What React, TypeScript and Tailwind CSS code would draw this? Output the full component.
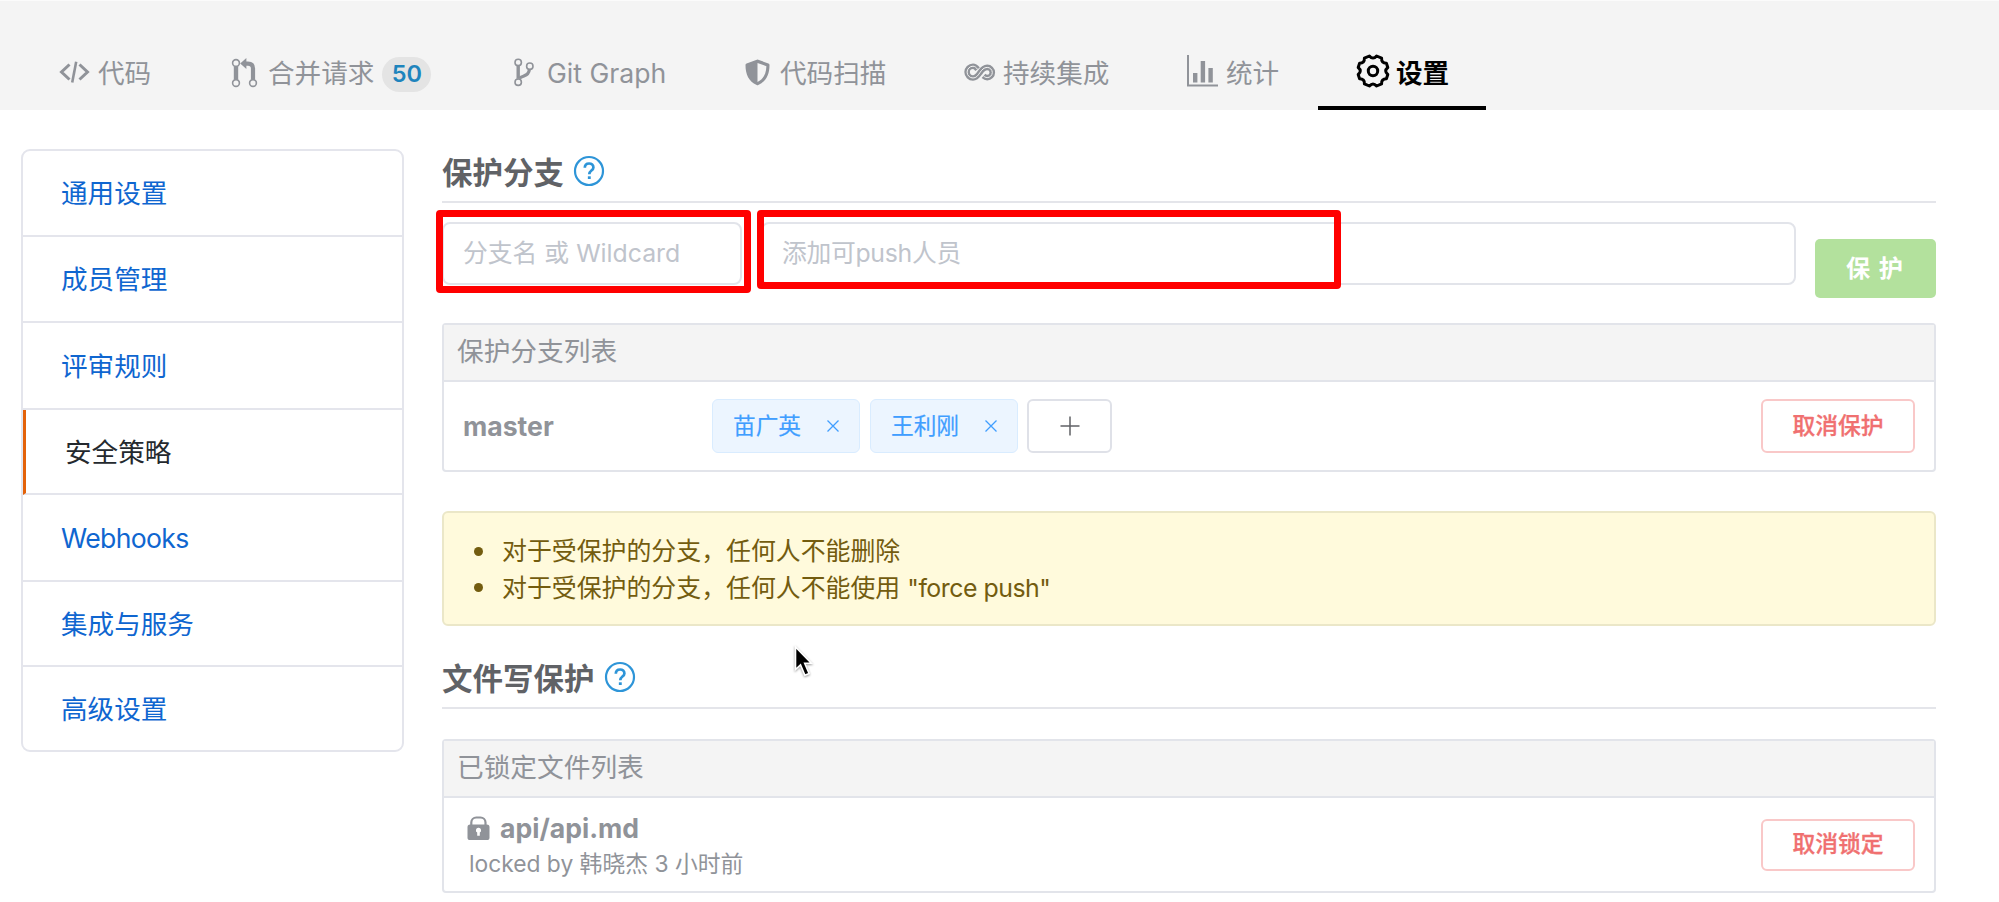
import type { ReactNode } from "react";

function CodeIcon() {
  return (
    <svg width="31" height="24" viewBox="0 0 31 24" fill="none" stroke="currentColor" strokeWidth="3">
      <path d="M10.5 4.5 2.5 12l8 7.5M20.5 4.5l8 7.5-8 7.5" />
      <path d="M17.2 1.8 13.2 22.4" strokeWidth="2.6" />
    </svg>
  );
}

function MergeIcon() {
  return (
    <svg width="27" height="31" viewBox="0 0 27 31" fill="none" stroke="currentColor">
      <circle cx="5" cy="6" r="3.4" strokeWidth="1.6" />
      <circle cx="5" cy="26" r="3.4" strokeWidth="1.6" />
      <circle cx="22" cy="26" r="3.4" strokeWidth="1.6" />
      <path d="M5 9.5v13" strokeWidth="4.4" />
      <path d="M22 22.5V11.5Q22 6.6 17 6.6H14" strokeWidth="4.2" />
      <path d="M9.2 6.4 15.4 1v11z" fill="currentColor" stroke="none" />
    </svg>
  );
}

function BranchIcon() {
  return (
    <svg width="20" height="29" viewBox="0 0 20 29" fill="none" stroke="currentColor">
      <circle cx="4.2" cy="4.4" r="3.2" strokeWidth="1.6" />
      <circle cx="4.2" cy="24.2" r="3.2" strokeWidth="1.6" />
      <circle cx="15.8" cy="8.2" r="3.2" strokeWidth="1.6" />
      <path d="M4.2 7.8v13" strokeWidth="3.4" />
      <path d="M15.4 11.4c-.4 4-2.4 5.6-5.4 6.5-2.4.7-3.8 1.1-4.6 2.6" strokeWidth="3.2" />
    </svg>
  );
}

function ShieldIcon() {
  return (
    <svg width="25" height="27" viewBox="0 0 25 27" fill="currentColor">
      <path
        fillRule="evenodd"
        d="M12.5.6 23.4 4.4q1.1.4 1.1 1.5c0 9.4-3.2 16.3-11.2 20.1q-.8.4-1.6 0C3.7 22.2.5 15.3.5 5.9q0-1.1 1.1-1.5zM12.5 3.9v19.2c6-3 8.600-8.300 8.900-15.900z"
      />
    </svg>
  );
}

const LOOP = "M13.600 7.300C12.300 5.600 11 4.200 9 4.200a5.900 5.900 0 0 0 0 11.800c3.300 0 4.800-2.300 6.800-5.200S19.800 5.400 23.200 5.400a5 5 0 0 1 0 10.200c-1.600 0-2.600-.7-3.700-1.700";

function InfinityIcon() {
  return (
    <svg width="32" height="20" viewBox="0 0 32 20" fill="none">
      <path d={LOOP} stroke="currentColor" strokeWidth="5.600" />
      <path d={LOOP} stroke="#f4f4f4" strokeWidth="1" />
    </svg>
  );
}

function ChartIcon() {
  return (
    <svg width="32" height="34" viewBox="0 0 32 34" fill="currentColor">
      <path d="M0 0h2v29.600h29v2H0z" />
      <path d="M6 18h4.400v9.600H6zM13.700 6h4.400v21.600h-4.400zM21.400 13h4.400v14.600h-4.400z" />
    </svg>
  );
}

function GearIcon() {
  return (
    <svg width="34" height="36" viewBox="0 0 34 36" fill="none" stroke="currentColor" strokeWidth="3" strokeLinejoin="round">
      <path d="M13.400 3Q17 7.200 20.600 3L25.600 5.200Q25.200 10 30.400 10.200L31.800 14.500Q27.600 18 31.800 21.500L30.400 25.800Q25.200 26 25.600 30.800L20.600 33Q17 28.800 13.400 33L8.400 30.800Q8.800 26 3.600 25.800L2.200 21.500Q6.400 18 2.200 14.500L3.600 10.200Q8.800 10 8.400 5.200z" />
      <circle cx="17" cy="18" r="4.700" />
    </svg>
  );
}

function LockIcon() {
  return (
    <svg width="23" height="26" viewBox="0 0 23 26" fill="none">
      <path d="M4.300 11V7.500a5 5 0 0 1 5-5h4.200a5 5 0 0 1 5 5V11" stroke="currentColor" strokeWidth="2.200" />
      <rect x="0.500" y="9.500" width="22" height="15.500" rx="2.600" fill="currentColor" />
      <path d="M11.500 12.800a2.500 2.500 0 0 1 1.300 4.700v3.200h-2.600v-3.200a2.500 2.500 0 0 1 1.300-4.700z" fill="#fff" />
    </svg>
  );
}

function HelpIcon() {
  return (
    <svg width="32" height="32" viewBox="0 0 32 32" fill="none" stroke="#2e95d8">
      <circle cx="16" cy="16" r="14" strokeWidth="2.200" />
      <path d="M11.800 12.800c0-2.700 1.800-4.300 4.300-4.300s4.300 1.600 4.300 3.900c0 3.200-4.100 3.200-4.100 6.800" strokeWidth="2.700" />
      <path d="M16.300 21.300v2.700" strokeWidth="2.900" />
    </svg>
  );
}

function CloseIcon() {
  return (
    <svg width="12" height="12" viewBox="0 0 12 12" stroke="currentColor" strokeWidth="1.300">
      <path d="M.5.5l11 11M11.500.5l-11 11" />
    </svg>
  );
}

function Tab({ icon, iconBox, width, label, badge }: { icon: ReactNode; iconBox: string; width: string; label: string; badge?: string }) {
  return (
    <a className={`flex h-full items-center ${width}`}>
      <span className={`flex shrink-0 items-center pb-[1px] ${iconBox}`}>{icon}</span>
      <span className="pt-[1px] whitespace-nowrap">{label}</span>
      {badge && (
        <span className="mt-[3px] ml-[8px] flex h-[35px] w-[49px] items-center justify-center rounded-full bg-[#e4e4e4] text-[23.500px] font-semibold text-[#1e84bd]">
          {badge}
        </span>
      )}
    </a>
  );
}

const menu = [
  { label: "通用设置", height: "h-[86px]" },
  { label: "成员管理", height: "h-[86px]" },
  { label: "评审规则", height: "h-[87px]" },
  { label: "安全策略", height: "h-[85px]", active: true },
  { label: "Webhooks", height: "h-[87px]" },
  { label: "集成与服务", height: "h-[85px]" },
  { label: "高级设置", height: "h-[83px]" },
];

function SectionTitle({ children }: { children: string }) {
  return (
    <div className="flex h-[62px] items-center gap-[9px] border-b-2 border-[#e4e5ea] pt-[4px]">
      <h2 className="pt-[1px] text-[30.500px] leading-none font-bold text-[#606266]">{children}</h2>
      <span className="pb-[4px]"><HelpIcon /></span>
    </div>
  );
}

function PanelHeader({ children }: { children: string }) {
  return (
    <div className="flex h-[57px] items-center border-b-2 border-[#e2e4ea] bg-[#f4f4f4] pb-[2px] pl-[13px] text-[26.700px] leading-none text-[#909399]">
      {children}
    </div>
  );
}

function Tag({ name }: { name: string }) {
  return (
    <span className="flex h-[54px] w-[148px] items-center justify-between rounded-[6px] border border-[#d9ecff] bg-[#ecf5ff] pr-[20px] pl-[20px] text-[22.700px] text-[#409eff] [-webkit-text-stroke:0.200px]">
      {name}
      <CloseIcon />
    </span>
  );
}

function DangerButton({ children, height }: { children: string; height: string }) {
  return (
    <button className={`w-[154px] rounded-[6px] border-2 border-[#f9c8c8] bg-white text-[22.800px] font-medium text-[#f07070] [-webkit-text-stroke:0.300px] ${height}`}>
      {children}
    </button>
  );
}

export default function App() {
  return (
    <div className="h-[902px] w-[1999px] overflow-hidden bg-white font-['Inter','Noto_Sans_CJK_SC',sans-serif]">
      <header className="h-[110px] border-t border-[#fbfbfb] bg-[#f4f4f4] pt-[34px]">
        <nav className="flex h-[75px] pl-[59px] text-[26.600px] leading-none text-[#909399]">
          <Tab icon={<CodeIcon />} iconBox="w-[39px]" width="w-[172px]" label="代码" />
          <Tab icon={<MergeIcon />} iconBox="w-[37px]" width="w-[283px]" label="合并请求" badge="50" />
          <Tab icon={<BranchIcon />} iconBox="w-[33px]" width="w-[231px]" label="Git Graph" />
          <Tab icon={<ShieldIcon />} iconBox="w-[35px]" width="w-[219px]" label="代码扫描" />
          <Tab icon={<InfinityIcon />} iconBox="w-[39px]" width="w-[223px]" label="持续集成" />
          <Tab icon={<ChartIcon />} iconBox="w-[39px]" width="w-[131px]" label="统计" />
          <a className="flex h-full w-[168px] items-center border-b-4 border-black pt-[4px] pl-[38px] font-bold text-black">
            <span className="w-[40px] shrink-0 pb-[4px]"><GearIcon /></span>
            <span className="pt-[1px] whitespace-nowrap">设置</span>
          </a>
        </nav>
      </header>

      <div className="flex pl-[21px]">
        <aside className="mt-[39px] h-[603px] w-[383px] overflow-hidden rounded-[9px] border-2 border-[#e4e5ec] text-[26.600px] leading-none">
          {menu.map((item) => (
            <a
              key={item.label}
              className={`flex items-center border-b-2 border-[#e4e5ec] pt-[1px] last:border-b-0 ${item.height} ${
                item.active
                  ? "border-l-[3px] border-l-[#e36209] pl-[39px] text-[#24292e]"
                  : "pl-[38px] text-[#0f66d0]"
              } ${item.label === "Webhooks" ? "tracking-[-0.025em]" : "tracking-normal"}`}
            >
              {item.label}
            </a>
          ))}
        </aside>

        <main className="ml-[38px] w-[1494px] pt-[31px]">
          <SectionTitle>保护分支</SectionTitle>

          <div className="relative mt-[19px] flex h-[76px] items-start text-[24.800px] leading-none text-[#c0c4cc]">
            <div className="flex h-[63px] w-[300px] items-center rounded-[8px] border-2 border-[#e2e4ea] pl-[19px]">
              <span className="whitespace-nowrap">分支名 或 Wildcard</span>
            </div>
            <div className="ml-[19px] flex h-[63px] w-[1035px] items-center rounded-[8px] border-2 border-[#e2e4ea] pl-[19px]">
              <span className="tracking-[-0.300px] whitespace-nowrap">添加可push人员</span>
            </div>
            <button className="mt-[17px] ml-[19px] h-[59px] w-[121px] rounded-[5px] bg-[#b3e19d] pt-[1px] pr-[2px] text-[24.200px] font-bold text-white [word-spacing:3px]">
              保 护
            </button>
            <div className="absolute -top-[12px] -left-[6px] h-[83px] w-[315px] rounded-[4px] border-[7px] border-[#ff0000]" />
            <div className="absolute -top-[12px] left-[315px] h-[79px] w-[584px] rounded-[4px] border-[7px] border-[#ff0000]" />
          </div>

          <section className="mt-[25px] h-[149px] rounded-[4px] border-2 border-[#e2e4ea]">
            <PanelHeader>保护分支列表</PanelHeader>
            <div className="flex h-[88px] items-center pr-[19px] leading-none">
              <span className="w-[268px] pt-[1px] pl-[19px] text-[26.600px] font-bold text-[#909399]">master</span>
              <div className="flex gap-[10px]">
                <Tag name="苗广英" />
                <Tag name="王利刚" />
              </div>
              <button className="ml-[9px] flex h-[54px] w-[85px] items-center justify-center rounded-[6px] border-2 border-[#dfe1e8]">
                <svg width="20" height="20" viewBox="0 0 20 20" stroke="#606266" strokeWidth="1.500">
                  <path d="M10 0.500v19M.5 10h19" />
                </svg>
              </button>
              <span className="ml-auto"><DangerButton height="h-[54px]">取消保护</DangerButton></span>
            </div>
          </section>

          <ul className="mt-[39px] h-[115px] rounded-[6px] border-2 border-[#ebe7c8] bg-[#fffadc] pt-[20px] pl-[30px] text-[24.900px] leading-[36.500px] text-[#735c0f]">
            {[
              { text: "对于受保护的分支，任何人不能删除", code: "" },
              { text: "对于受保护的分支，任何人不能使用", code: '"force push"' },
            ].map((rule) => (
              <li key={rule.text} className="flex items-center">
                <span className="mr-[19px] h-[9px] w-[9px] rounded-full bg-[#735c0f]" />
                <span>
                  {rule.text} <span className="tracking-[-0.500px]">{rule.code}</span>
                </span>
              </li>
            ))}
          </ul>

          <div className="mt-[21px]">
            <SectionTitle>文件写保护</SectionTitle>
          </div>

          <section className="mt-[30px] h-[154px] rounded-[4px] border-2 border-[#e2e4ea]">
            <PanelHeader>已锁定文件列表</PanelHeader>
            <div className="flex h-[93px] items-center justify-between pr-[19px] text-[#909399]">
              <div className="pt-[2px] pl-[23px]">
                <div className="flex items-center gap-[10px] text-[26.600px] leading-[36px] font-bold">
                  <LockIcon />
                  api/api.md
                </div>
                <div className="pl-[2px] text-[22.800px] leading-[36px]">locked by 韩晓杰 3 小时前</div>
              </div>
              <DangerButton height="h-[52px]">取消锁定</DangerButton>
            </div>
          </section>
        </main>
      </div>

      <svg className="absolute top-[644px] left-[791px]" width="26" height="36" viewBox="0 0 26 36">
        <path
          d="M4.500 3v22.500l5-4.600 4.400 10.400 4.200-1.800-4.400-10.200h6.600z"
          fill="#000"
          stroke="#fff"
          strokeWidth="1.600"
          className="drop-shadow-[0_1px_1px_rgba(0,0,0,0.400)]"
        />
      </svg>
    </div>
  );
}
